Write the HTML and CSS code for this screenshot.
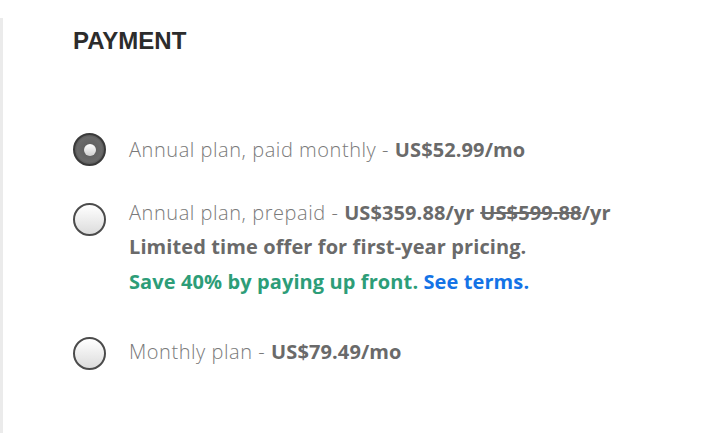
FILE: index.html
```html
<!DOCTYPE html>
<html>
<head>
<meta charset="utf-8">
<link rel="stylesheet" href="styles.css">
</head>
<body>
<div class="panel">
  <h2 class="title">PAYMENT</h2>
  <div class="options">
    <div class="option">
      <span class="radio checked"></span>
      <div class="label">
        <div class="line">Annual plan, paid monthly - <b>US$52.99/mo</b></div>
      </div>
    </div>
    <div class="option option-multi">
      <span class="radio"></span>
      <div class="label">
        <div class="line">Annual plan, prepaid - <b>US$359.88/yr</b> <b><s>US$599.88</s>/yr</b></div>
        <div class="line"><b>Limited time offer for first-year pricing.</b></div>
        <div class="line green"><b>Save 40% by paying up front. <a class="link" href="#">See terms.</a></b></div>
      </div>
    </div>
    <div class="option option-last">
      <span class="radio"></span>
      <div class="label">
        <div class="line">Monthly plan - <b>US$79.49/mo</b></div>
      </div>
    </div>
  </div>
</div>
</body>
</html>
```
FILE: styles.css
```css
html, body {
  margin: 0;
  padding: 0;
  background: #fff;
}
.panel {
  margin-top: 18px;
  border-left: 3px solid #ebebeb;
  padding: 7px 0 0 70px;
  height: 415px;
  box-sizing: border-box;
  font-family: "Open Sans", sans-serif;
}
.title {
  margin: 0;
  font-family: "Liberation Sans", Arial, sans-serif;
  font-weight: 700;
  font-size: 24px;
  line-height: 32px;
  color: #2c2c2c;
}
.options {
  margin-top: 76px;
  display: flex;
  flex-direction: column;
}
.option {
  display: flex;
  align-items: flex-start;
  gap: 23px;
}
.option-multi {
  margin-top: 28px;
}
.option-multi .radio {
  margin-top: 7px;
}
.option-last {
  margin-top: 36px;
}
.radio {
  flex: none;
  width: 29px;
  height: 29px;
  border-radius: 50%;
  border: 2px solid #4b4b4b;
  background: linear-gradient(#ffffff, #dcdcdc);
  position: relative;
}
.option-last .radio {
  margin-top: 2px;
}
.radio.checked {
  background: radial-gradient(circle at 50% 50%, #5a5a5a 0, #6a6a6a 60%, #2f2f2f 100%);
  border-color: #3a3a3a;
}
.radio.checked::after {
  content: "";
  position: absolute;
  left: 50%;
  top: 50%;
  width: 12px;
  height: 12px;
  margin: -6px 0 0 -6px;
  border-radius: 50%;
  background: linear-gradient(#ffffff, #cfcfcf);
}
.line {
  font-size: 20px;
  line-height: 34.5px;
  font-weight: 300;
  letter-spacing: 0.55px;
  color: #7a7a7a;
}
.line b {
  font-weight: 700;
  letter-spacing: 0.1px;
  color: #6a6a6a;
}
.green b {
  color: #2d9d78;
}
.green .link {
  color: #1473e6;
  text-decoration: none;
}
s {
  text-decoration-thickness: 2px;
}
```
